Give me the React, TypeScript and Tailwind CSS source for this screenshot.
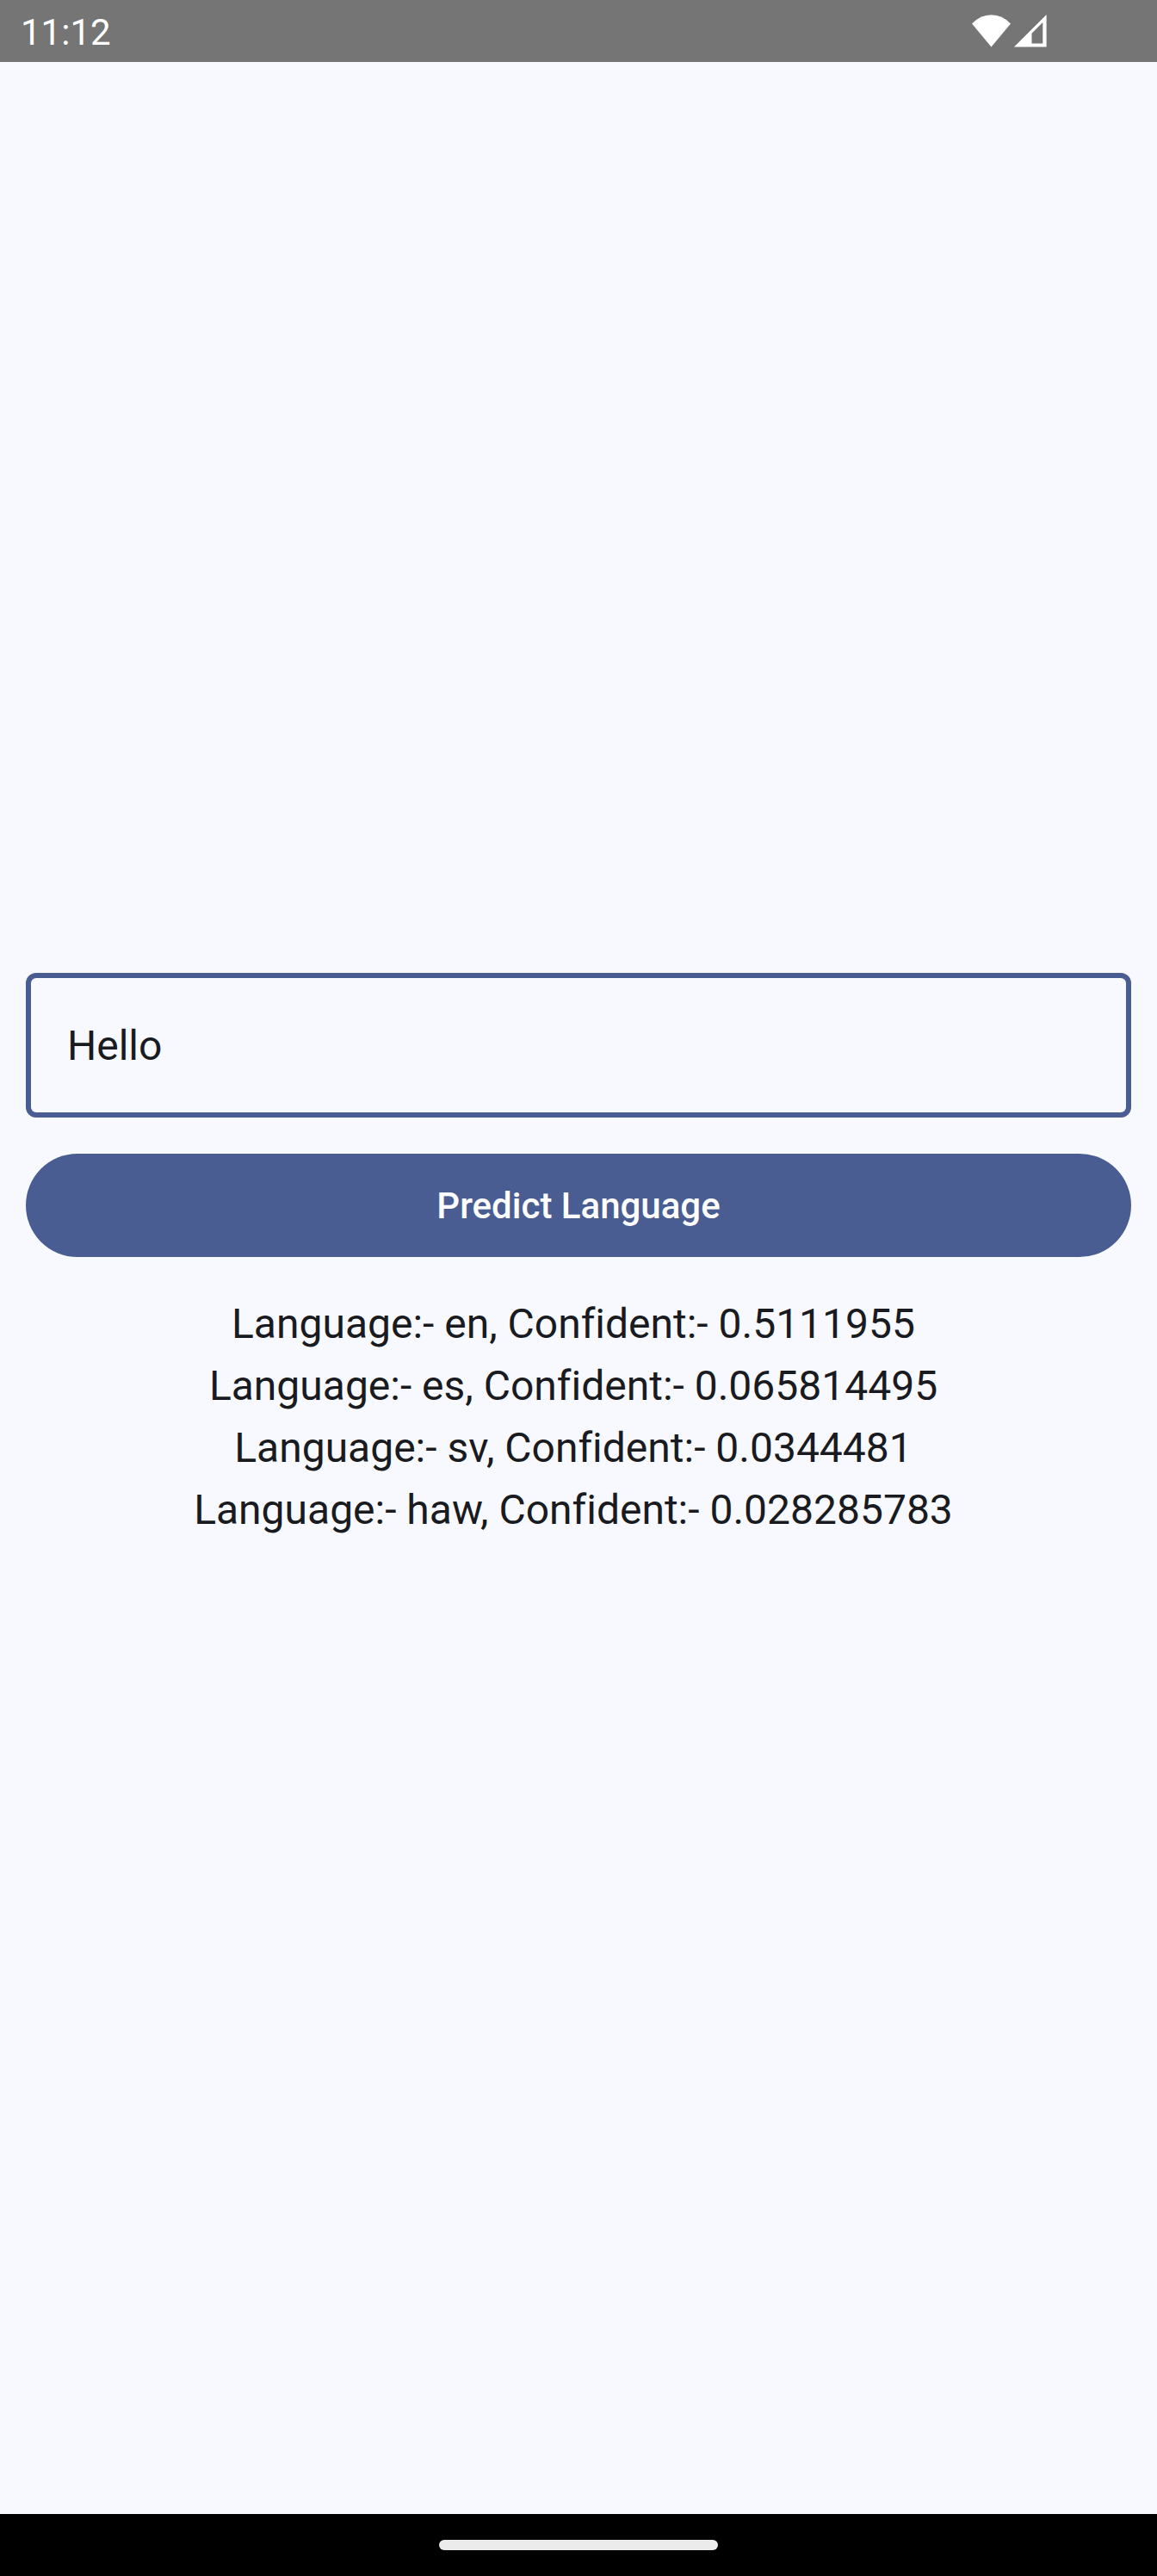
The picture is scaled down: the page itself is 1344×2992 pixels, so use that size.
import { useState } from "react";

const predictions = [
  { language: "en", confidence: "0.5111955" },
  { language: "es", confidence: "0.065814495" },
  { language: "sv", confidence: "0.0344481" },
  { language: "haw", confidence: "0.028285783" },
];

function WifiIcon() {
  return (
    <svg className="h-[38px] w-[45px]" viewBox="0 0 45 38" fill="#fff" aria-hidden="true">
      <path d="M0 10.5Q9.8.2 22.5.2T45 10.5L22.5 37.6Z" />
    </svg>
  );
}

function SignalIcon() {
  return (
    <svg className="size-[38px]" viewBox="0 0 38 38" fill="#fff" fillRule="evenodd" aria-hidden="true">
      <path d="M0 37.6L37.6 0V37.6ZM20.5 21.7V33.5H33.3V9Z" />
    </svg>
  );
}

function StatusBar() {
  return (
    <header className="flex h-18 items-center justify-between bg-[#757575] pr-32 pl-6 text-white">
      <time className="pt-[3px] text-[42px] leading-none">11:12</time>
      <div className="flex gap-1">
        <WifiIcon />
        <SignalIcon />
      </div>
    </header>
  );
}

export default function App() {
  const [text, setText] = useState("Hello");

  return (
    <div className="flex min-h-screen flex-col bg-[#f8f9ff] font-['Roboto',sans-serif] text-[#191b20]">
      <StatusBar />
      <main className="flex flex-1 flex-col justify-center px-[30px] pb-18">
        <input
          type="text"
          aria-label="Text"
          value={text}
          onChange={(e) => setText(e.target.value)}
          className="h-[168px] w-full rounded-xl border-6 border-[#4a5d92] bg-transparent px-[42px] text-[48px] outline-none"
        />
        <button
          type="button"
          className="mt-[42px] h-[120px] w-full rounded-full bg-[#4a5d92] text-[42px] font-medium text-white"
        >
          Predict Language
        </button>
        <ul className="mt-[42px] pr-3 text-center text-[48px] leading-[72px] [font-variant-ligatures:none]">
          {predictions.map((p) => (
            <li key={p.language}>{`Language:- ${p.language}, Confident:- ${p.confidence}`}</li>
          ))}
        </ul>
      </main>
      <footer className="flex h-18 items-center justify-center bg-black">
        <div className="h-3 w-[324px] rounded-full bg-[#ebebeb]" />
      </footer>
    </div>
  );
}
